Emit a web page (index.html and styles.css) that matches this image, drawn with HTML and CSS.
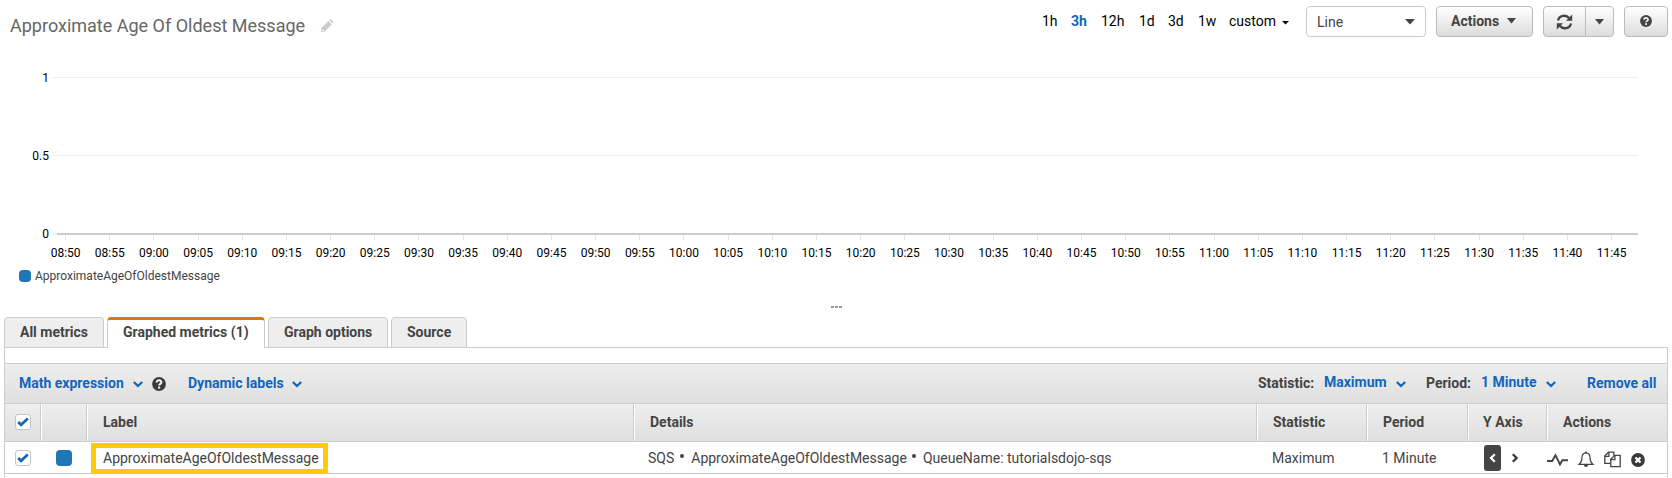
FILE: index.html
```html
<!DOCTYPE html>
<html lang="en">
<head>
<meta charset="utf-8">
<title>Approximate Age Of Oldest Message</title>
<link rel="stylesheet" href="styles.css">
</head>
<body>
<svg class="defs" width="0" height="0">
  <symbol id="chev" viewBox="0 0 10 7"><path d="M.8 1 L5 5 L9.2 1" fill="none" stroke="currentColor" stroke-width="2.3"/></symbol>
  <symbol id="help" viewBox="0 0 14 14"><circle cx="7" cy="7" r="6.9" fill="currentColor"/><path d="M4.7 5.5 C4.7 2.5 9.5 2.7 9.4 5.4 C9.3 6.9 7.1 6.9 7.1 8.6" fill="none" stroke="#f2f2f2" stroke-width="2"/><rect x="6" y="9.6" width="2.2" height="2" fill="#f2f2f2"/></symbol>
  <symbol id="check" viewBox="0 0 16 16"><rect x=".5" y=".5" width="15" height="15" rx="2.5" fill="#fff" stroke="#c4c4c4"/><path d="M3.2 8 L6.1 10.8 L12.8 4.4" fill="none" stroke="#1166bb" stroke-width="2.7"/></symbol>
</svg>

<header class="top">
  <h1 class="title">Approximate Age Of Oldest Message</h1>
  <svg class="pencil" width="14" height="14" viewBox="0 0 14 14"><path d="M1 9.3 L8.3 2 L11.7 5.4 L4.4 12.7 L1 13 Z M9.2 1.2 L10.1 .4 Q10.6 0 11.1 .4 L13.2 2.5 Q13.6 3 13.2 3.5 L12.5 4.5 Z" fill="#ccc"/><path d="M2.2 9.8 L2.2 11.7 L4 11.7" fill="none" stroke="#fff" stroke-width=".9"/></svg>
  <nav class="ranges">
    <span class="r1">1h</span><span class="r2 on">3h</span><span class="r3">12h</span><span class="r4">1d</span><span class="r5">3d</span><span class="r6">1w</span><span class="r7">custom</span>
    <svg width="7" height="4" viewBox="0 0 7 4"><path d="M0 0H7L3.5 3.5Z" fill="#000"/></svg>
  </nav>
  <div class="select"><span>Line</span><svg width="10" height="6" viewBox="0 0 10 6"><path d="M0 0H10L5 5.5Z" fill="#444"/></svg></div>
  <div class="btn actions"><span>Actions</span><svg width="9" height="6" viewBox="0 0 9 6"><path d="M0 0H9L4.5 5.5Z" fill="#444"/></svg></div>
  <div class="btn split">
    <span class="half"><svg width="17" height="16" viewBox="0 0 17 16"><path d="M2 6.6 C3.2 1.2 10 .2 13.2 4.2 M15 9.4 C13.8 14.8 7 15.8 3.8 11.8" fill="none" stroke="#444" stroke-width="2.4"/><path d="M16.2 .6V6.8H10Z M.8 15.4V9.2H7Z" fill="#444"/></svg></span>
    <span class="half caret"><svg width="9" height="6" viewBox="0 0 9 6"><path d="M0 0H9L4.5 5.5Z" fill="#444"/></svg></span>
  </div>
  <div class="btn helpbtn"><svg width="12" height="12"><use href="#help"/></svg></div>
</header>

<section class="chart">
  <div class="line l1"><span>1</span><i></i></div>
  <div class="line l2"><span>0.5</span><i></i></div>
  <div class="line l3"><span>0</span><b></b><i></i></div>
  <div class="times">
    <span>08:50</span><span>08:55</span><span>09:00</span><span>09:05</span><span>09:10</span><span>09:15</span><span>09:20</span><span>09:25</span><span>09:30</span><span>09:35</span><span>09:40</span><span>09:45</span><span>09:50</span><span>09:55</span><span>10:00</span><span>10:05</span><span>10:10</span><span>10:15</span><span>10:20</span><span>10:25</span><span>10:30</span><span>10:35</span><span>10:40</span><span>10:45</span><span>10:50</span><span>10:55</span><span>11:00</span><span>11:05</span><span>11:10</span><span>11:15</span><span>11:20</span><span>11:25</span><span>11:30</span><span>11:35</span><span>11:40</span><span>11:45</span>
  </div>
  <div class="legend"><i></i><span>ApproximateAgeOfOldestMessage</span></div>
  <div class="grip"><i></i><i></i><i></i></div>
</section>

<div class="tabs">
  <div class="tab t1">All metrics</div>
  <div class="tab t2 active">Graphed metrics (1)</div>
  <div class="tab t3">Graph options</div>
  <div class="tab t4">Source</div>
</div>

<main class="panel">
  <div class="toolbar">
    <a class="m1">Math expression</a><svg class="chev" width="10" height="7"><use href="#chev"/></svg>
    <svg class="info" width="14" height="14"><use href="#help"/></svg>
    <a class="m2">Dynamic labels</a><svg class="chev" width="10" height="7"><use href="#chev"/></svg>
    <div class="right">
      <span class="k1">Statistic:</span><a class="m3 up">Maximum</a><svg class="chev" width="10" height="7"><use href="#chev"/></svg>
      <span class="k2">Period:</span><a class="m4 up">1 Minute</a><svg class="chev" width="10" height="7"><use href="#chev"/></svg>
      <a class="m5">Remove all</a>
    </div>
  </div>
  <div class="row head">
    <div class="chk"><svg width="16" height="16"><use href="#check"/></svg></div><div></div><div>Label</div><div>Details</div><div>Statistic</div><div>Period</div><div class="yh">Y Axis</div><div>Actions</div>
  </div>
  <div class="row body">
    <div class="chk"><svg width="16" height="16"><use href="#check"/></svg></div>
    <div class="sw"><i></i></div>
    <div class="name"><span>ApproximateAgeOfOldestMessage</span></div>
    <div class="det"><span>SQS</span><i></i><span class="d2">ApproximateAgeOfOldestMessage</span><i></i><span>QueueName: tutorialsdojo-sqs</span></div>
    <div>Maximum</div>
    <div>1 Minute</div>
    <div class="axis">
      <span class="left"><svg width="7" height="10" viewBox="0 0 7 10"><path d="M5.8 1.2 L2 5 L5.8 8.8" fill="none" stroke="#fff" stroke-width="2.2"/></svg></span>
      <svg width="7" height="10" viewBox="0 0 7 10"><path d="M.8 1.2 L4.6 5 L.8 8.8" fill="none" stroke="#333" stroke-width="2.2"/></svg>
    </div>
    <div class="icons">
      <svg width="21" height="14" viewBox="0 0 21 14"><path d="M0 8H5.2L8.5 2.2L13 11.5L15.3 7.3H21" fill="none" stroke="#444" stroke-width="1.9"/></svg>
      <svg width="16" height="17" viewBox="0 0 16 17"><path d="M8 1.8 C4.8 2 4 4.3 4 6.5 C4 10 3 11.8 1.2 13.3 H14.8 C13 11.8 12 10 12 6.5 C12 4.3 11.2 2 8 1.8Z" fill="none" stroke="#444" stroke-width="1.2"/><path d="M8 .5V2" stroke="#444" stroke-width="1.6"/><path d="M6 14 A2 2 0 0 0 10 14Z" fill="#444"/></svg>
      <svg width="17" height="17" viewBox="0 0 17 17"><g fill="none" stroke="#444" stroke-width="1.3"><path d="M6.5 12.3H.8V5L4.5 1.2H9.8V4.4"/><path d="M.8 5.4H4.9V1.2"/><path d="M6.8 8.2L10.6 4.4H16.2V15.7H6.8Z"/><path d="M6.8 8.6H10.9V4.4"/></g></svg>
      <svg width="14" height="14" viewBox="0 0 14 14"><circle cx="7" cy="7" r="6.9" fill="#3a3a3a"/><path d="M4.5 4.5L9.5 9.5M9.5 4.5L4.5 9.5" stroke="#fff" stroke-width="2.3"/></svg>
    </div>
  </div>
</main>
</body>
</html>
```

FILE: styles.css
```css
* { box-sizing: border-box; }
body {
  margin: 0;
  width: 1672px;
  height: 478px;
  overflow: hidden;
  background: #fff;
  color: #444;
  font: 14px/16px Roboto, sans-serif;
  display: flex;
  flex-direction: column;
}
svg { display: block; flex: none; overflow: visible; }
.defs { display: none; }

.top { display: flex; height: 61px; padding: 6px 4px 0 10px; align-items: flex-start; }
.title { margin: 9px 0 0; width: 310px; font-size: 18px; line-height: 22px; font-weight: 400; color: #666; white-space: nowrap; }
.pencil { margin-top: 13px; }
.ranges { display: flex; margin: 7px 0 0 708px; width: 264px; color: #000; line-height: 16px; }
.ranges .on { color: #1166bb; font-weight: 700; }
.ranges svg { margin: 8px 0 0; }
.r1 { width: 29px; } .r2 { width: 30px; } .r3 { width: 38px; } .r4 { width: 29px; }
.r5 { width: 30px; } .r6 { width: 31px; } .r7 { width: 53px; }
.select, .btn { height: 31px; border: 1px solid #bbb; border-radius: 4px; display: flex; align-items: center; }
.select { width: 120px; padding: 1px 10px 0; justify-content: space-between; border-color: #ccc; background: #fff; }
.btn { margin-left: 10px; font-weight: 700; background: linear-gradient(#fff, #dcdcdc); }
.actions { width: 97px; padding: 0 0 1px 14px; gap: 8px; }
.split { width: 71px; }
.half { display: flex; align-items: center; justify-content: center; width: 42px; height: 29px; }
.half.caret { width: 28px; border-left: 1px solid #bbb; }
.helpbtn { width: 44px; justify-content: center; padding-bottom: 1px; }

.chart { height: 256px; color: #000; font-size: 12px; display: flex; flex-direction: column; }
.line { display: flex; align-items: center; height: 16px; }
.line span { width: 49px; text-align: right; line-height: 16px; }
.line i { width: 1586px; height: 1px; margin: -2px 0 0 3px; background: #eee; }
.l1 { margin-top: 9px; }
.l2 { margin-top: 62px; }
.l3 { margin-top: 62px; }
.l3 b { width: 5px; height: 1px; margin-left: 3px; background: #eee; }
.l3 i { width: 1581px; height: 2px; margin: 0; background: #ccc; }
.times { display: flex; width: 1590px; margin: -7px 0 0 43.5px; }
.times span { flex: 1 1 0; text-align: center; line-height: 14px; }
.times span::before { content: ""; display: block; width: 1px; height: 5px; margin: 0 auto 6px; background: #e6e6e6; }
.legend { display: flex; align-items: center; height: 16px; margin: 8px 0 0 19px; color: #444; gap: 4px; }
.legend i { width: 12px; height: 12px; border-radius: 4px; background: #1f77b4; }
.grip { display: flex; justify-content: center; gap: 1px; margin-top: 22px; }
.grip i { width: 3px; height: 2px; background: #999; }

.tabs { display: flex; height: 31px; padding-left: 4px; gap: 3px; position: relative; z-index: 1; font-weight: 700; }
.tab { height: 31px; border: 1px solid #ccc; border-radius: 4px 4px 0 0; background: #eee; padding: 6px 0 0 15px; white-space: nowrap; }
.t1 { width: 100px; } .t2 { width: 158px; } .t3 { width: 120px; } .t4 { width: 76px; }
.tab.active { background: #fff; border-top: 3px solid #e07700; border-bottom: 0; padding-top: 4px; }

.panel { margin: -1px 4px 0; width: 1664px; height: 131px; border: 1px solid #ccc; border-bottom: 0; padding-top: 15px; }
.toolbar { height: 41px; border-top: 1px solid #ccc; border-bottom: 1px solid #ccc; background: linear-gradient(#eee, #dfdfdf); display: flex; align-items: center; padding: 0 0 2px 14px; font-weight: 700; white-space: nowrap; }
.toolbar a { color: #1166bb; }
.chev { color: #1166bb; margin-top: 4px; }
.m1 { width: 114px; } .info { margin: 3px 22px 0 9px; color: #3a3a3a; } .m2 { width: 104px; }
.right { display: flex; align-items: center; margin-left: auto; padding-right: 11px; }
.up { position: relative; top: -1px; }
.k1 { width: 66px; } .m3 { width: 72px; } .k2 { width: 55px; margin-left: 20px; } .m4 { width: 65px; }
.m5 { width: 69px; margin-left: 31px; }
.right .chev { margin-top: 3px; }

.row { display: grid; grid-template-columns: 36px 46px 547px 623px 110px 101px 79px 120px; border-bottom: 1px solid #ccc; }
.row > div { display: flex; align-items: center; white-space: nowrap; }
.head { height: 38px; background: linear-gradient(#eee, #dfdfdf); font-weight: 700; }
.head > div { border-right: 1px solid #ccc; border-left: 1px solid #fff; padding: 0 0 2px 15px; }
.head > div:first-child { border-left: 0; }
.head > div:last-child { border-right: 0; }
.head > .yh { padding-left: 14px; }
.row .chk { padding-left: 10px; }
.body { height: 32px; }
.body > div { padding-left: 15px; }
.sw i { width: 16px; height: 16px; border-radius: 4px; background: #1f77b4; }
.body .name { padding-left: 4px; }
.name span { width: 237px; height: 31px; margin-top: 1px; border: 5px solid #ffc90e; padding: 2px 0 0 7px; line-height: 16px; }
.body .det { padding-left: 14px; }
.det i { width: 4px; height: 4px; border-radius: 50%; background: #444; margin: -4px 7px 0 6px; }
.det .d2 { margin-right: -1px; }
.body .axis { padding-left: 16px; gap: 11px; }
.left { display: flex; align-items: center; justify-content: center; width: 17px; height: 26px; border-radius: 3px; background: #444; }
.body .icons { padding-left: 0; gap: 10px; padding-top: 3px; }
```
